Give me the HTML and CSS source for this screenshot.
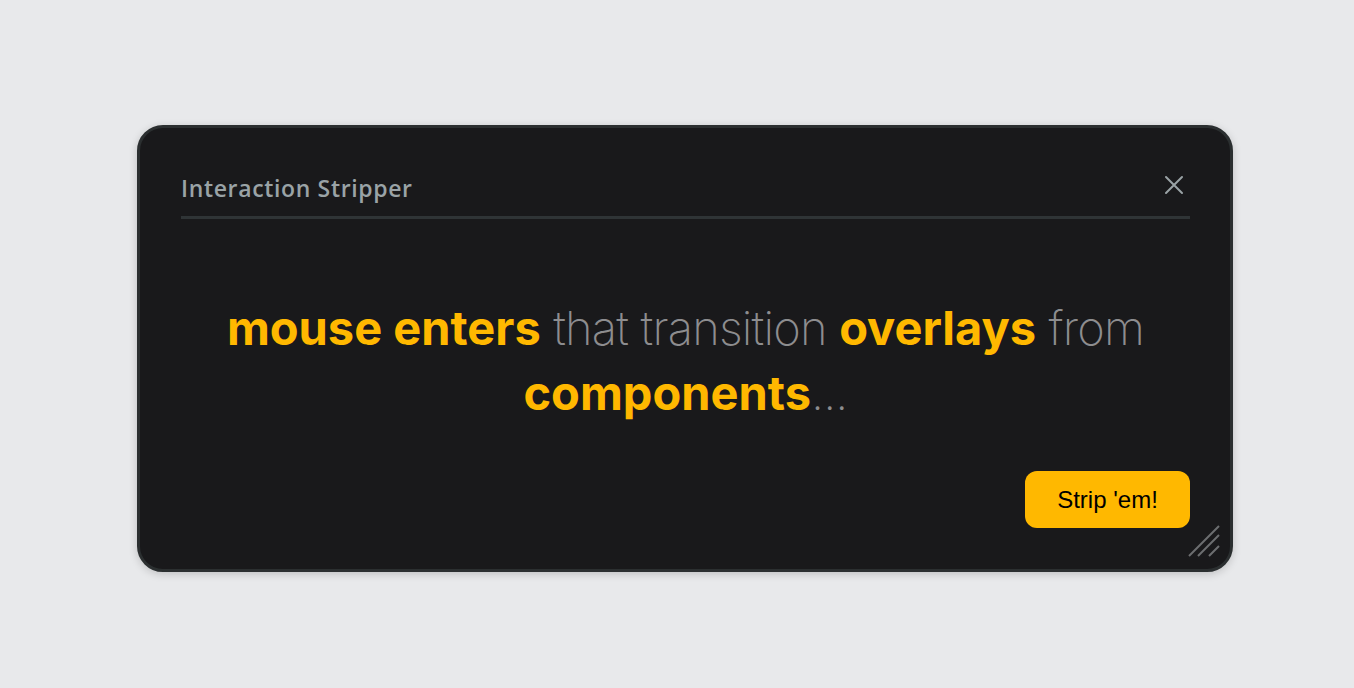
FILE: index.html
```html
<!DOCTYPE html>
<html>
<head>
<meta charset="utf-8">
<link rel="stylesheet" href="styles.css">
</head>
<body>
<div class="page">
  <div class="card">
    <div class="header">
      <span class="title">Interaction Stripper</span>
      <button class="close" aria-label="Close">
        <svg width="20" height="20" viewBox="0 0 20 20"><path d="M2 2 L18 18 M18 2 L2 18" stroke="#9aa3a6" stroke-width="2" stroke-linecap="round"/></svg>
      </button>
    </div>
    <p class="message"><b>mouse enters</b> that transition <b>overlays</b> from <b>components</b>...</p>
    <div class="footer">
      <button class="strip">Strip 'em!</button>
    </div>
    <svg class="grip" width="34" height="34" viewBox="0 0 34 34"><path d="M2 32 L32 2 M11 32 L32 11 M22 32 L32 22" stroke="#6c6e70" stroke-width="2" fill="none"/></svg>
  </div>
</div>
</body>
</html>
```
FILE: styles.css
```css
html, body {
  margin: 0;
  padding: 0;
  background: #e8e9eb;
}
.page {
  height: 688px;
  display: flex;
  align-items: flex-start;
  padding: 125px 0 0 137px;
  box-sizing: border-box;
}
.card {
  position: relative;
  width: 1096px;
  height: 447px;
  box-sizing: border-box;
  background: #19191b;
  border: 3px solid #2b2f30;
  border-radius: 26px;
  box-shadow: 0 2px 8px rgba(0,0,0,0.18);
  padding: 46px 40px 41px 41px;
  display: flex;
  flex-direction: column;
}
.header {
  display: flex;
  justify-content: space-between;
  align-items: center;
  border-bottom: 3px solid #2f3436;
  padding-bottom: 14px;
}
.title {
  font-family: "Open Sans", "Noto Sans", sans-serif;
  font-weight: 600;
  font-size: 23px;
  line-height: 28px;
  color: #9aa3a6;
  letter-spacing: 0.65px;
}
.close {
  background: none;
  border: none;
  padding: 0;
  margin-right: 6px;
  margin-top: -6px;
  width: 20px;
  height: 20px;
  display: flex;
}
.message {
  margin: 76px 0 0 0;
  text-align: center;
  font-family: Inter, "Noto Sans", sans-serif;
  font-weight: 200;
  font-size: 47px;
  line-height: 65px;
  color: #8d8d8f;
  letter-spacing: -0.8px;
}
.message b {
  font-weight: 700;
  color: #ffb800;
  letter-spacing: 0;
}
.footer {
  margin-top: auto;
  display: flex;
  justify-content: flex-end;
}
.strip {
  width: 165px;
  height: 57px;
  background: #ffb800;
  border: none;
  border-radius: 12px;
  font-family: "Liberation Sans", Arial, sans-serif;
  font-size: 24px;
  color: #000;
}
.grip {
  position: absolute;
  right: 9px;
  bottom: 11px;
}
```
